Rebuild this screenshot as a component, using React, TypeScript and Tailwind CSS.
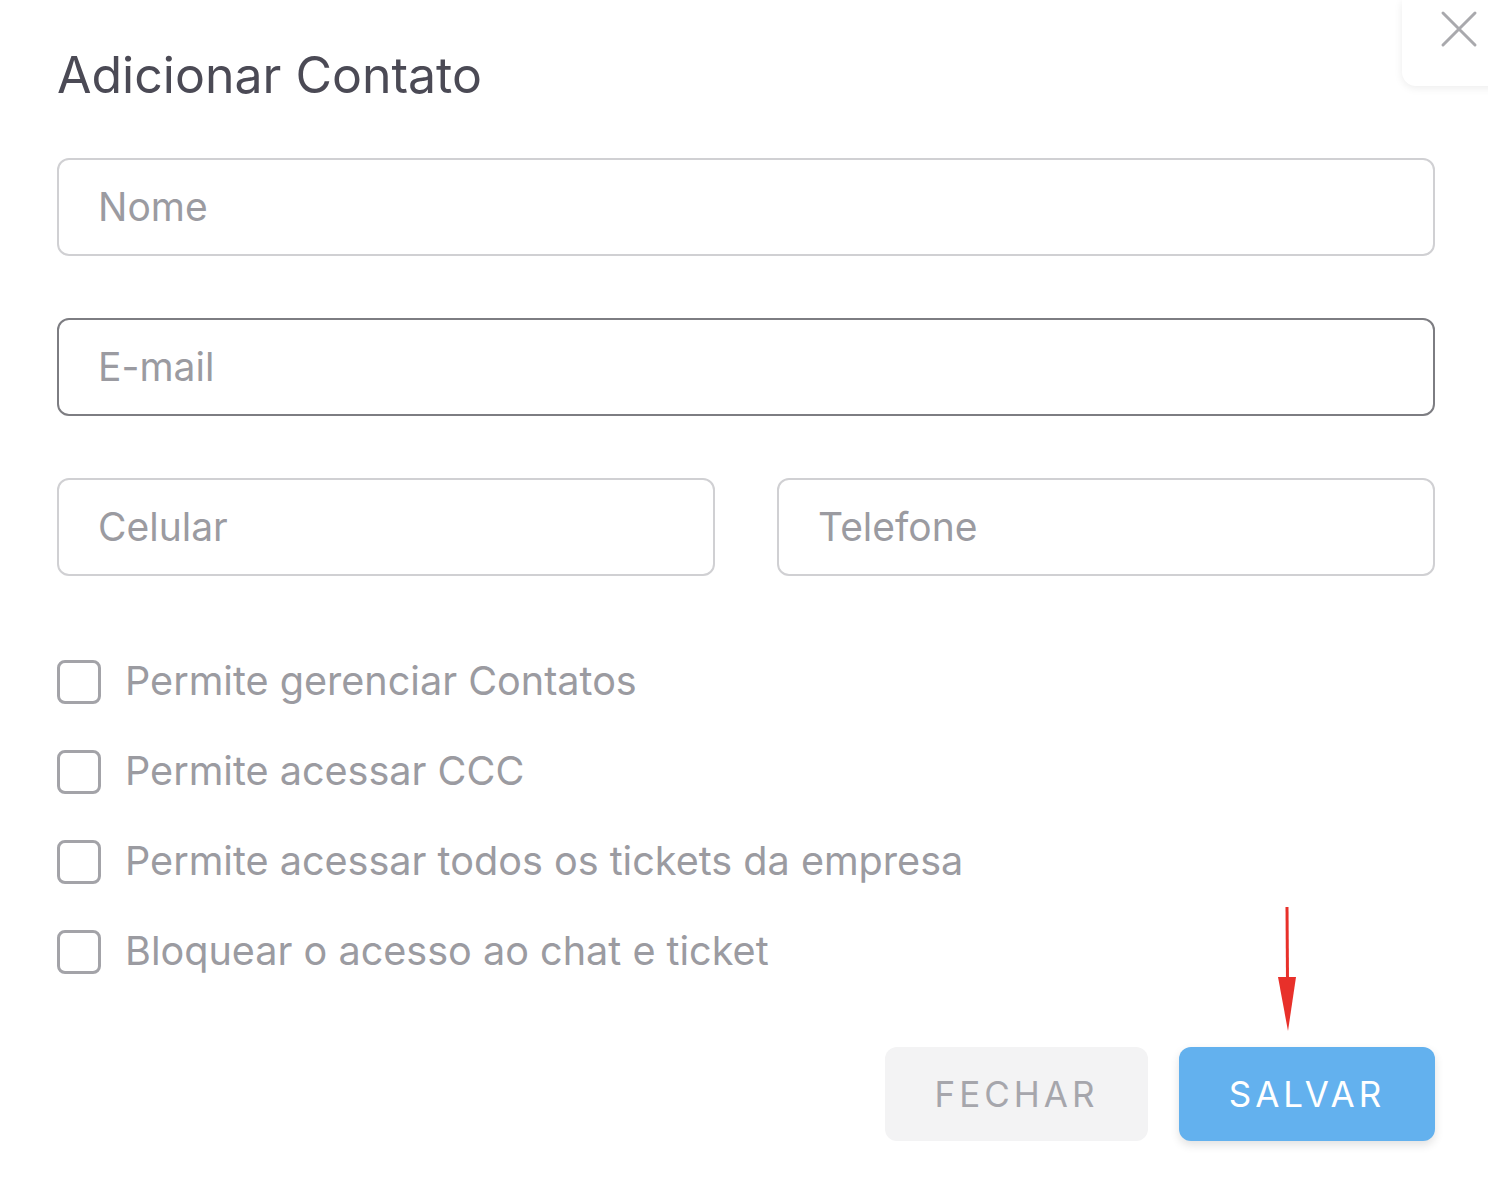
import React from "react";

const font = { fontFamily: "Inter, 'Noto Sans', sans-serif" };

function Field({ label, dark }: { label: string; dark?: boolean }) {
  return (
    <div
      className={`flex h-[98px] w-full items-center rounded-[12px] border-2 px-[39px] text-[39px] text-[#9b9ba1] ${
        dark ? "border-[#7d7d82]" : "border-[#d0d0d3]"
      }`}
    >
      {label}
    </div>
  );
}

function Check({ label }: { label: string }) {
  return (
    <label className="flex h-[90px] items-center gap-[24px]">
      <span className="h-[44px] w-[44px] shrink-0 rounded-[8px] border-[3px] border-[#a3a3a8]" />
      <span className="text-[39.6px] text-[#9b9ba1]">{label}</span>
    </label>
  );
}

export default function App() {
  return (
    <div className="relative h-[1180px] w-[1488px] overflow-hidden bg-white" style={font}>
      {/* close button */}
      <div className="absolute right-[-20px] top-0 flex h-[86px] w-[106px] items-start justify-start rounded-bl-[14px] bg-white pl-[38px] pt-[10px] shadow-[0_2px_8px_rgba(0,0,0,0.08)]">
        <svg width="38" height="38" viewBox="0 0 38 38" fill="none" stroke="#a9a9ad" strokeWidth="3" strokeLinecap="round">
          <path d="M3 3L35 35M35 3L3 35" />
        </svg>
      </div>

      <div className="flex flex-col pl-[57px] pr-[53px] pt-[50px]">
        <h1 className="text-[50px] font-normal leading-none text-[#4b4a55]">
          Adicionar Contato
        </h1>

        <div className="mt-[58px] flex flex-col gap-[62px]">
          <Field label="Nome" />
          <Field label="E-mail" dark />
          <div className="flex gap-[62px]">
            <Field label="Celular" />
            <Field label="Telefone" />
          </div>
        </div>

        <div className="mt-[61px] flex flex-col">
          <Check label="Permite gerenciar Contatos" />
          <Check label="Permite acessar CCC" />
          <Check label="Permite acessar todos os tickets da empresa" />
          <Check label="Bloquear o acesso ao chat e ticket" />
        </div>

        <div className="relative mt-[50px] flex justify-end gap-[31px]">
          <button className="flex h-[94px] w-[263px] items-center justify-center rounded-[12px] bg-[#f3f3f4] text-[35px] tracking-[4px] text-[#a6a6ac]">
            FECHAR
          </button>
          <button className="flex h-[94px] w-[256px] items-center justify-center rounded-[12px] bg-[#63b1ee] text-[35px] tracking-[4px] text-white shadow-[0_4px_10px_rgba(0,0,0,0.12)]">
            SALVAR
          </button>
          {/* red annotation arrow */}
          <svg
            className="absolute right-[136px] top-[-142px]"
            width="24"
            height="130"
            viewBox="0 0 24 130"
            fill="#e8302a"
          >
            <path d="M10.5 2 L13.5 2 L14 76 L11 76 Z" />
            <path d="M3 72 L21 72 L13 126 Z" />
          </svg>
        </div>
      </div>
    </div>
  );
}
